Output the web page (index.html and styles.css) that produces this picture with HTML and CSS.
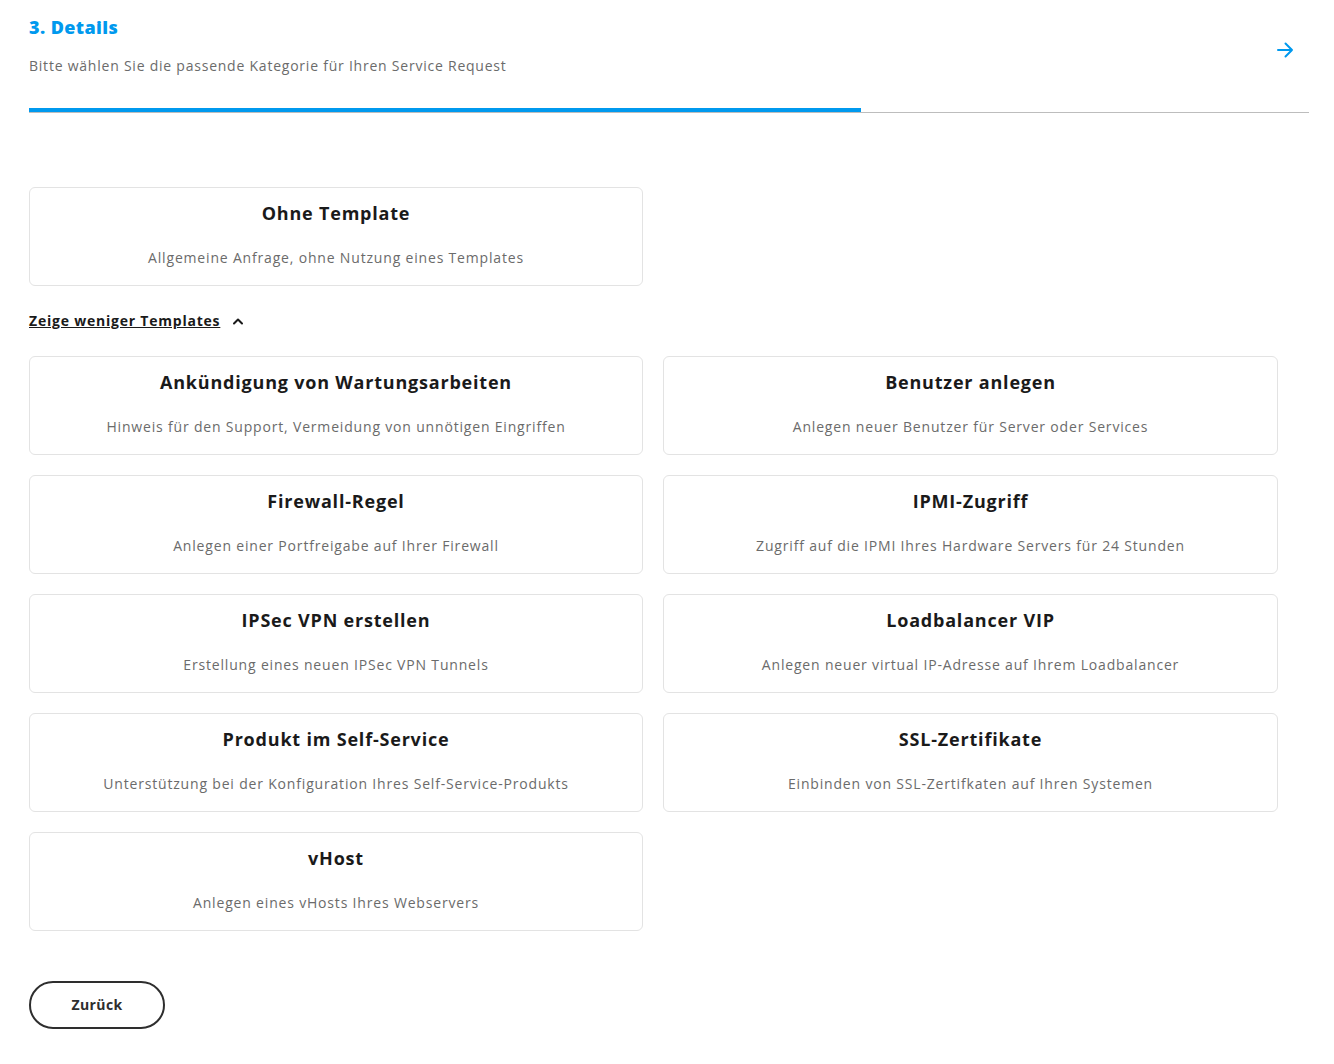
FILE: index.html
```html
<!DOCTYPE html>
<html lang="de">
<head>
<meta charset="utf-8">
<title>Details</title>
<link rel="stylesheet" href="styles.css">
</head>
<body>
<div class="page">
  <header class="step-header">
    <div class="step-text">
      <h1 class="step-title">3. Details</h1>
      <p class="step-sub">Bitte wählen Sie die passende Kategorie für Ihren Service Request</p>
    </div>
    <button class="next-btn" aria-label="Weiter">
      <svg width="18" height="16" viewBox="0 0 18 16" fill="none" stroke="#0099ee" stroke-width="2" stroke-linecap="round" stroke-linejoin="round"><path d="M2 8h14M9.5 1.5 16 8l-6.5 6.5"/></svg>
    </button>
  </header>
  <div class="progress"><div class="progress-fill" style="width:65%"></div></div>

  <div class="grid single">
    <div class="card"><div class="card-title">Ohne Template</div><div class="card-desc">Allgemeine Anfrage, ohne Nutzung eines Templates</div></div>
  </div>

  <div class="toggle-row">
    <a class="toggle" href="#">Zeige weniger Templates</a>
    <svg class="chev" width="12" height="8" viewBox="0 0 12 8" fill="none" stroke="#1a1a1a" stroke-width="2" stroke-linecap="round" stroke-linejoin="round"><path d="M2 6.5 6 2.5l4 4"/></svg>
  </div>

  <div class="grid">
    <div class="card"><div class="card-title">Ankündigung von Wartungsarbeiten</div><div class="card-desc">Hinweis für den Support, Vermeidung von unnötigen Eingriffen</div></div>
    <div class="card"><div class="card-title">Benutzer anlegen</div><div class="card-desc">Anlegen neuer Benutzer für Server oder Services</div></div>
    <div class="card"><div class="card-title">Firewall-Regel</div><div class="card-desc">Anlegen einer Portfreigabe auf Ihrer Firewall</div></div>
    <div class="card"><div class="card-title">IPMI-Zugriff</div><div class="card-desc">Zugriff auf die IPMI Ihres Hardware Servers für 24 Stunden</div></div>
    <div class="card"><div class="card-title">IPSec VPN erstellen</div><div class="card-desc">Erstellung eines neuen IPSec VPN Tunnels</div></div>
    <div class="card"><div class="card-title">Loadbalancer VIP</div><div class="card-desc">Anlegen neuer virtual IP-Adresse auf Ihrem Loadbalancer</div></div>
    <div class="card"><div class="card-title">Produkt im Self-Service</div><div class="card-desc">Unterstützung bei der Konfiguration Ihres Self-Service-Produkts</div></div>
    <div class="card"><div class="card-title">SSL-Zertifikate</div><div class="card-desc">Einbinden von SSL-Zertifkaten auf Ihren Systemen</div></div>
    <div class="card"><div class="card-title">vHost</div><div class="card-desc">Anlegen eines vHosts Ihres Webservers</div></div>
  </div>

  <button class="back-btn">Zurück</button>
</div>
</body>
</html>
```

FILE: styles.css
```css
* { box-sizing: border-box; }
html, body { margin: 0; padding: 0; background: #fff; }
body {
  font-family: "Open Sans", "Noto Sans", "Liberation Sans", sans-serif;
  color: #1a1a1a;
}
.page {
  width: 1280px;
  margin-left: 29px;
  padding-top: 16px;
}
.step-header {
  display: flex;
  justify-content: space-between;
  align-items: flex-start;
}
.step-title {
  margin: 0;
  font-size: 18px;
  line-height: 22px;
  font-weight: 800;
  color: #0099ee;
  letter-spacing: 0.4px;
}
.step-sub {
  margin: 18px 0 0;
  font-size: 14px;
  line-height: 20px;
  color: #6b6b6b;
  letter-spacing: 0.77px;
}
.next-btn {
  margin: 26px 15px 0 0;
  padding: 0;
  border: 0;
  background: none;
  width: 18px;
  height: 16px;
  display: flex;
}
.progress {
  margin-top: 32px;
  height: 5px;
  border-bottom: 1px solid #bdbdbd;
}
.progress-fill {
  height: 4px;
  background: #0099ee;
}
.grid {
  width: 1249px;
  display: grid;
  grid-template-columns: 614px 615px;
  column-gap: 20px;
  row-gap: 20px;
  margin-top: 25px;
}
.grid.single { margin-top: 74px; }
.card {
  height: 99px;
  border: 1px solid #e3e3e3;
  border-radius: 6px;
  text-align: center;
  padding-top: 14px;
}
.card-title {
  font-size: 18px;
  line-height: 22px;
  font-weight: 700;
  color: #1a1a1a;
  letter-spacing: 0.8px;
}
.card-desc {
  margin-top: 24px;
  font-size: 14px;
  line-height: 20px;
  color: #6b6b6b;
  letter-spacing: 0.82px;
}
.toggle-row {
  display: flex;
  align-items: center;
  height: 20px;
  margin-top: 25px;
}
.toggle {
  font-size: 14px;
  line-height: 20px;
  font-weight: 700;
  color: #1a1a1a;
  text-decoration: underline;
  letter-spacing: 0.78px;
}
.chev { margin-left: 12px; }
.back-btn {
  display: block;
  margin-top: 50px;
  width: 136px;
  height: 48px;
  border: 2px solid #2e2e2e;
  border-radius: 24px;
  background: #fff;
  font-family: inherit;
  font-size: 14px;
  font-weight: 700;
  color: #2e2e2e;
  padding: 0 0 1px;
  letter-spacing: 0.4px;
}
```
